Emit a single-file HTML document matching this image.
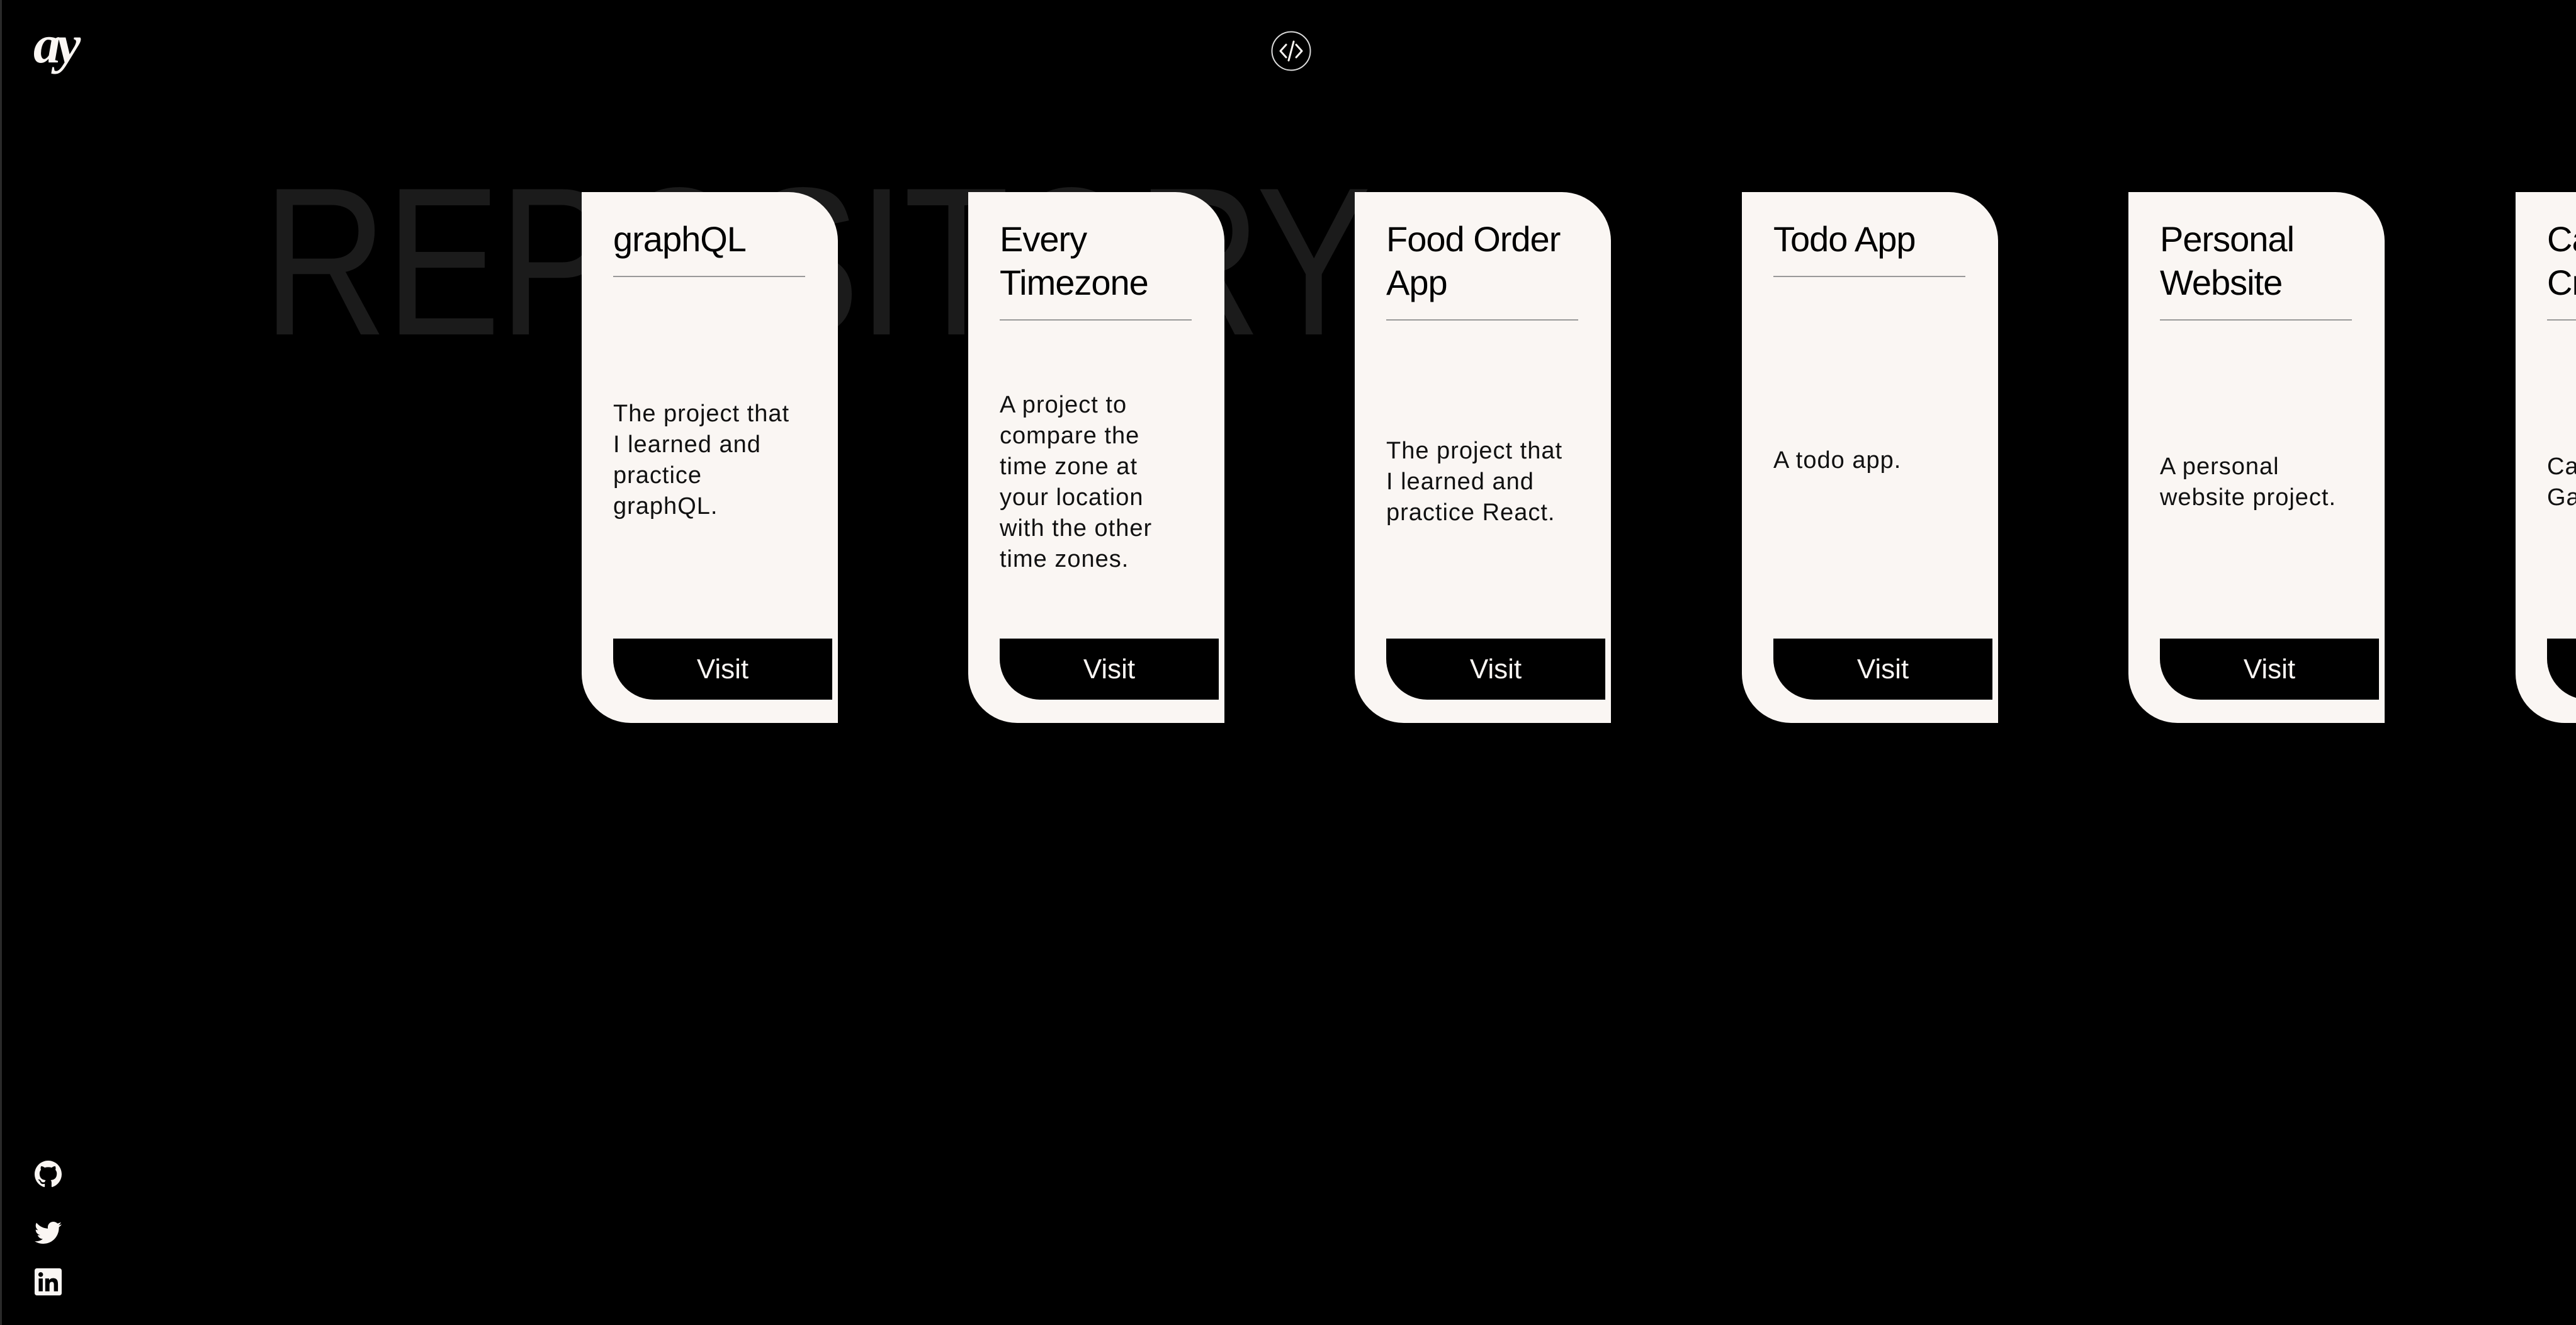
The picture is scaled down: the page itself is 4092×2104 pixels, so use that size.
<!DOCTYPE html>
<html><head><meta charset="utf-8"><style>
html,body{margin:0;padding:0;background:#000;width:4092px;height:2104px;overflow:hidden;position:relative}
body{border-left:3px solid #2a2a2a;box-sizing:border-box}
.logo{position:absolute;left:50px;top:20px;color:#faf6f3;font:italic 700 86px "Liberation Serif",serif;letter-spacing:-6px}
.code{position:absolute;left:2016px;top:49px;width:64px;height:64px}
.big{position:absolute;left:414px;top:248px;font:300 335px/1 "Liberation Sans",sans-serif;color:#1b1b1b;transform:scaleX(0.82);transform-origin:left top;white-space:nowrap;letter-spacing:-4px}
.card{position:absolute;top:305px;width:407px;height:843px;background:#faf6f3;border-radius:0 78px 0 78px;box-sizing:border-box;padding:40px 0 0 50px;display:flex;flex-direction:column;overflow:hidden}
.card h2{margin:0;font:400 56px/69px "Liberation Sans",sans-serif;color:#000;width:305px;border-bottom:2px solid #999;padding-bottom:24px;letter-spacing:-1px;white-space:nowrap}
.card .d{flex:1;display:flex;align-items:center;font:400 38px/49px "Liberation Sans",sans-serif;color:#111;width:300px;letter-spacing:1px;padding-top:8px}
.card .b{margin-bottom:37px;width:348px;height:97px;background:#000;color:#faf6f3;border-radius:0 0 0 65px;font:400 44px/97px "Liberation Sans",sans-serif;text-align:center}
.soc{position:absolute;left:52px;width:43px;height:43px}
</style></head><body>
<div class="logo">ay</div>
<svg class="code" viewBox="0 0 64 64"><circle cx="32" cy="32" r="30.5" fill="none" stroke="#ddd" stroke-width="2"/><path d="M24 22 L15 32 L24 42 M40 22 L49 32 L40 42 M36 17 L28 47" fill="none" stroke="#faf6f3" stroke-width="3" stroke-linecap="round" stroke-linejoin="round"/></svg>
<div class="big">REPOSITORY</div>

<div class="card" style="left:921px"><h2>graphQL</h2><div class="d">The project that I learned and practice graphQL.</div><div class="b">Visit</div></div>
<div class="card" style="left:1535px"><h2>Every<br>Timezone</h2><div class="d">A project to compare the time zone at your location with the other time zones.</div><div class="b">Visit</div></div>
<div class="card" style="left:2149px"><h2>Food Order<br>App</h2><div class="d">The project that I learned and practice React.</div><div class="b">Visit</div></div>
<div class="card" style="left:2764px"><h2>Todo App</h2><div class="d">A todo app.</div><div class="b">Visit</div></div>
<div class="card" style="left:3378px"><h2>Personal<br>Website</h2><div class="d">A personal website project.</div><div class="b">Visit</div></div>
<div class="card" style="left:3993px"><h2>Card<br>Crawler</h2><div class="d">Card<br>Game.</div><div class="b">Visit</div></div>

<svg class="soc" style="top:1843px" viewBox="0 0 16 16"><path fill="#faf6f3" d="M8 0C3.580 0 0 3.58 0 8c0 3.54 2.29 6.53 5.47 7.59.4.07.55-.17.55-.38 0-.19-.01-.82-.01-1.490-2.01.37-2.530-.49-2.69-.94-.09-.23-.48-.94-.82-1.13-.28-.15-.68-.52-.01-.53.63-.01 1.08.58 1.230.82.72 1.210 1.87.87 2.33.66.07-.52.28-.87.51-1.07-1.78-.2-3.64-.89-3.64-3.95 0-.87.31-1.59.82-2.15-.08-.2-.36-1.02.08-2.12 0 0 .67-.21 2.2.82.64-.18 1.32-.27 2-.27.68 0 1.36.09 2 .27 1.53-1.04 2.2-.82 2.2-.82.44 1.1.16 1.92.08 2.12.51.56.82 1.27.82 2.15 0 3.07-1.87 3.75-3.65 3.95.29.25.54.73.54 1.48 0 1.07-.01 1.93-.01 2.2 0 .21.15.46.55.38A8.013 8.013 0 0016 8c0-4.42-3.58-8-8-8z"/></svg>
<svg class="soc" style="top:1936px" viewBox="0 0 24 24"><path fill="#faf6f3" d="M23.95 4.57a10 10 0 01-2.82.77 4.96 4.96 0 002.16-2.72c-.95.55-2 .95-3.12 1.170a4.92 4.92 0 00-8.38 4.48A13.94 13.94 0 011.64 3.16a4.92 4.92 0 001.52 6.57 4.9 4.9 0 01-2.23-.61v.06a4.92 4.92 0 003.95 4.83 4.96 4.96 0 01-2.21.08 4.93 4.93 0 004.6 3.42A9.87 9.87 0 010 19.54a13.94 13.94 0 007.55 2.21c9.06 0 14-7.5 14-13.98 0-.21 0-.42-.02-.63A9.94 9.94 0 0024 4.59z"/></svg>
<svg class="soc" style="top:2014px" viewBox="0 0 24 24"><rect width="24" height="24" rx="2" fill="#faf6f3"/><path fill="#000" d="M3.6 9h3.6v11.4H3.6zM5.4 3.4a2.1 2.1 0 110 4.2 2.1 2.1 0 010-4.2zM9.4 9h3.4v1.6c.5-.9 1.7-1.9 3.5-1.9 3.7 0 4.4 2.4 4.4 5.6v6.1h-3.6v-5.4c0-1.3 0-3-1.8-3s-2.1 1.4-2.1 2.9v5.5H9.4z"/></svg>
</body></html>
